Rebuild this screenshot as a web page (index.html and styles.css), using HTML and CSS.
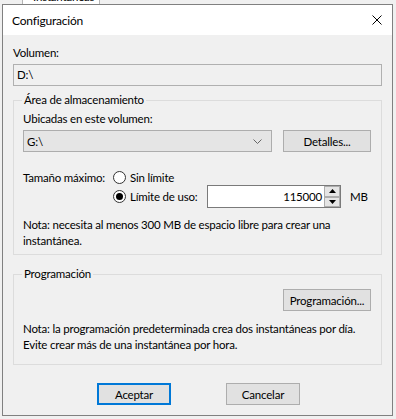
FILE: index.html
```html
<!DOCTYPE html>
<html lang="es">
<head>
    <meta charset="UTF-8">
    <title>Configuración</title>
    <link rel="stylesheet" href="styles.css">
</head>
<body>

<div class="backdrop">
    <div class="back-tab">Instantáneas</div>
</div>

<div class="dialog">
    <div class="titlebar">
        <span class="title">Configuración</span>
        <svg class="close" width="10" height="10" viewBox="0 0 10 10">
            <path d="M0.5 0.5 L9.5 9.5 M9.5 0.5 L0.5 9.5" stroke="#000" stroke-width="1" fill="none"/>
        </svg>
    </div>

    <div class="content">
        <div class="label">Volumen:</div>
        <div class="textbox readonly">D:\</div>

        <div class="group storage">
            <span class="group-title">Área de almacenamiento</span>
            <div class="label">Ubicadas en este volumen:</div>
            <div class="row combo-row">
                <div class="combo">
                    <span>G:\</span>
                    <svg width="9" height="5" viewBox="0 0 9 5">
                        <path d="M0.5 0.5 L4.5 4.5 L8.5 0.5" stroke="#666" stroke-width="1" fill="none"/>
                    </svg>
                </div>
                <div class="button">Detalles...</div>
            </div>

            <div class="size">
                <div class="size-label">Tamaño máximo:</div>
                <div class="options">
                    <div class="radio-row">
                        <span class="radio"></span>
                        <span>Sin límite</span>
                    </div>
                    <div class="radio-row">
                        <span class="radio checked"></span>
                        <span class="limit-label">Límite de uso:</span>
                        <div class="spin">
                            <span class="spin-value">115000</span>
                            <div class="spin-buttons">
                                <div class="spin-btn">
                                    <svg width="7" height="4" viewBox="0 0 7 4"><path d="M0 4 L3.5 0 L7 4 Z" fill="#000"/></svg>
                                </div>
                                <div class="spin-btn">
                                    <svg width="7" height="4" viewBox="0 0 7 4"><path d="M0 0 L3.5 4 L7 0 Z" fill="#000"/></svg>
                                </div>
                            </div>
                        </div>
                        <span class="unit">MB</span>
                    </div>
                </div>
            </div>

            <p class="note">Nota: necesita al menos 300 MB de espacio libre para crear una<br>instantánea.</p>
        </div>

        <div class="group schedule">
            <span class="group-title">Programación</span>
            <div class="row right">
                <div class="button">Programación...</div>
            </div>
            <p class="note">Nota: la programación predeterminada crea dos instantáneas por día.<br>Evite crear más de una instantánea por hora.</p>
        </div>

        <div class="actions">
            <div class="button default">Aceptar</div>
            <div class="button">Cancelar</div>
        </div>
    </div>
</div>

</body>
</html>
```

FILE: styles.css
```css
* {
    margin: 0;
    padding: 0;
    box-sizing: border-box;
}

body {
    width: 396px;
    height: 419px;
    overflow: hidden;
    background: #ffffff;
    font-family: Lato, "Liberation Sans", sans-serif;
    font-size: 11.5px;
    letter-spacing: -0.2px;
    color: #000;
    position: relative;
    white-space: nowrap;
}

/* window behind the dialog */
.backdrop {
    position: absolute;
    left: 0;
    top: 0;
    width: 396px;
    height: 419px;
    background: #f0f0f0;
}

.back-tab {
    position: absolute;
    left: 22px;
    top: -10px;
    width: 78px;
    height: 14px;
    padding-left: 10px;
    border-left: 1px solid #b4b4b4;
    border-right: 1px solid #b4b4b4;
    background: #fff;
    line-height: 14px;
    overflow: hidden;
}

.dialog {
    position: absolute;
    left: 2px;
    top: 4px;
    width: 391px;
    height: 412px;
    border: 1px solid #808080;
    background: #f0f0f0;
    display: flex;
    flex-direction: column;
}

.titlebar {
    height: 30px;
    background: #fff;
    display: flex;
    align-items: center;
    justify-content: space-between;
    padding: 0 10px 0 9px;
    flex-shrink: 0;
}

.title {
    font-size: 12px;
}

.content {
    padding: 10px 10px 0 10px;
}

.label {
    height: 16px;
    line-height: 16px;
}

.textbox {
    margin-top: 3px;
    height: 22px;
    line-height: 20px;
    padding-left: 3px;
    border: 1px solid #b0b0b0;
}

.textbox.readonly {
    background: #f0f0f0;
}

.group {
    position: relative;
    border: 1px solid #dcdcdc;
    padding: 0 10px 0 9px;
}

.group-title {
    position: absolute;
    left: 8px;
    top: -9px;
    padding: 0 2px;
    line-height: 16px;
    background: #f0f0f0;
}

.storage {
    margin-top: 14px;
    height: 155px;
    padding-top: 10px;
}

.schedule {
    margin-top: 19px;
    height: 91px;
    padding-top: 14px;
}

.row {
    display: flex;
    align-items: center;
}

.row.right {
    justify-content: flex-end;
}

.combo-row {
    margin-top: 3px;
    gap: 11px;
}

.combo {
    width: 249px;
    height: 22px;
    border: 1px solid #adadad;
    background: #e5e5e5;
    display: flex;
    align-items: center;
    justify-content: space-between;
    padding: 0 9px 0 3px;
}

.button {
    width: 88px;
    height: 22px;
    border: 1px solid #adadad;
    background: #e1e1e1;
    display: flex;
    align-items: center;
    justify-content: center;
}

.size {
    display: flex;
    margin-top: 18px;
}

.size-label {
    width: 90px;
    height: 16px;
    line-height: 16px;
}

.options {
    display: flex;
    flex-direction: column;
}

.radio-row {
    display: flex;
    align-items: center;
    height: 15px;
}

.radio-row + .radio-row {
    height: 23px;
}

.radio {
    width: 13px;
    height: 13px;
    border: 1px solid #333;
    border-radius: 50%;
    background: #fff;
    margin-right: 4px;
    display: flex;
    align-items: center;
    justify-content: center;
}

.radio.checked::after {
    content: "";
    width: 7px;
    height: 7px;
    border-radius: 50%;
    background: #000;
}

.limit-label {
    width: 77px;
}

.spin {
    width: 134px;
    height: 23px;
    border: 1px solid #7a7a7a;
    background: #fff;
    display: flex;
    align-items: center;
    justify-content: flex-end;
}

.spin-value {
    padding-right: 1px;
}

.spin-buttons {
    width: 16px;
    height: 21px;
    display: flex;
    flex-direction: column;
    margin-left: 1px;
}

.spin-btn {
    flex: 1;
    background: #e5e5e5;
    border: 1px solid #adadad;
    display: flex;
    align-items: center;
    justify-content: center;
}

.unit {
    margin-left: 9px;
}

.storage .note {
    margin-top: 9px;
    line-height: 16px;
}

.schedule .note {
    margin-top: 10px;
    line-height: 16px;
}

.actions {
    display: flex;
    gap: 55px;
    margin-top: 18px;
    padding-left: 84px;
}

.actions .button {
    width: 74px;
    height: 22px;
}

.button.default {
    border: 2px solid #0078d7;
}
```
